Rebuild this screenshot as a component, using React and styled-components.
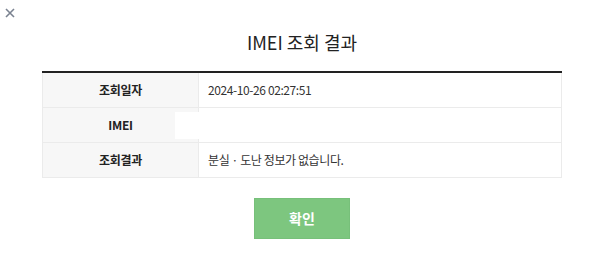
import styled, { createGlobalStyle } from 'styled-components';

const GlobalStyle = createGlobalStyle`
	html, body {
		margin: 0;
		padding: 0;
		background: #fff;
	}
	body {
		font-family: 'Noto Sans CJK KR', 'Noto Sans', sans-serif;
		color: #333;
	}
`;

const Popup = styled.div`
	position: relative;
	width: 600px;
	height: 266px;
	box-sizing: border-box;
	padding: 24px 38px 0 42px;
	display: flex;
	flex-direction: column;
	align-items: stretch;
`;

const CloseButton = styled.button`
	position: absolute;
	left: 3px;
	top: 6px;
	width: 14px;
	height: 14px;
	padding: 0;
	border: 0;
	background: none;
	display: flex;
	align-items: center;
	justify-content: center;
	cursor: pointer;
`;

const Title = styled.h1`
	margin: 0;
	font-size: 18px;
	font-weight: 400;
	line-height: 36px;
	color: #222;
	text-align: center;
`;

const ResultTable = styled.table`
	margin-top: 11px;
	width: 520px;
	border-collapse: collapse;
	border-top: 2px solid #222;
	table-layout: fixed;
`;

const LabelCell = styled.th`
	width: 156px;
	height: 35px;
	padding: 0;
	box-sizing: border-box;
	background: #f7f7f7;
	border: 1px solid #ebebeb;
	border-top: ${(p) => (p.$first ? '0' : '1px solid #ebebeb')};
	font-size: 12px;
	font-weight: 700;
	letter-spacing: -0.3px;
	color: #222;
	text-align: center;
	position: relative;
`;

const ValueCell = styled.td`
	height: 35px;
	padding: 0 0 1px 9px;
	box-sizing: border-box;
	border: 1px solid #ebebeb;
	border-top: ${(p) => (p.$first ? '0' : '1px solid #ebebeb')};
	font-size: 12px;
	letter-spacing: -0.4px;
	color: #333;
	text-align: left;
`;

const Masked = styled.span`
	position: absolute;
	right: -1px;
	top: 4px;
	width: 24px;
	height: 27px;
	background: #fff;
`;

const ButtonRow = styled.div`
	display: flex;
	justify-content: center;
	margin-top: 20px;
`;

const ConfirmButton = styled.button`
	width: 96px;
	height: 41px;
	border: 1px solid #77c07a;
	background: #7dc67f;
	color: #fff;
	font-family: inherit;
	font-size: 14px;
	font-weight: 700;
	cursor: pointer;
`;

const rows = [
	{ label: '조회일자', value: '2024-10-26 02:27:51' },
	{ label: 'IMEI', value: '', masked: true },
	{ label: '조회결과', value: '분실 · 도난 정보가 없습니다.' },
];

function App() {
	return (
		<>
			<GlobalStyle />
			<Popup>
				<CloseButton aria-label="닫기">
					<svg width="10" height="10" viewBox="0 0 10 10">
						<path d="M1 1L9 9M9 1L1 9" stroke="#7a8290" strokeWidth="1.6" />
					</svg>
				</CloseButton>
				<Title>IMEI 조회 결과</Title>
				<ResultTable>
					<tbody>
						{rows.map((row, i) => (
							<tr key={row.label}>
								<LabelCell $first={i === 0}>
									{row.label}
									{row.masked && <Masked />}
								</LabelCell>
								<ValueCell $first={i === 0}>{row.value}</ValueCell>
							</tr>
						))}
					</tbody>
				</ResultTable>
				<ButtonRow>
					<ConfirmButton>확인</ConfirmButton>
				</ButtonRow>
			</Popup>
		</>
	);
}

export default App;
